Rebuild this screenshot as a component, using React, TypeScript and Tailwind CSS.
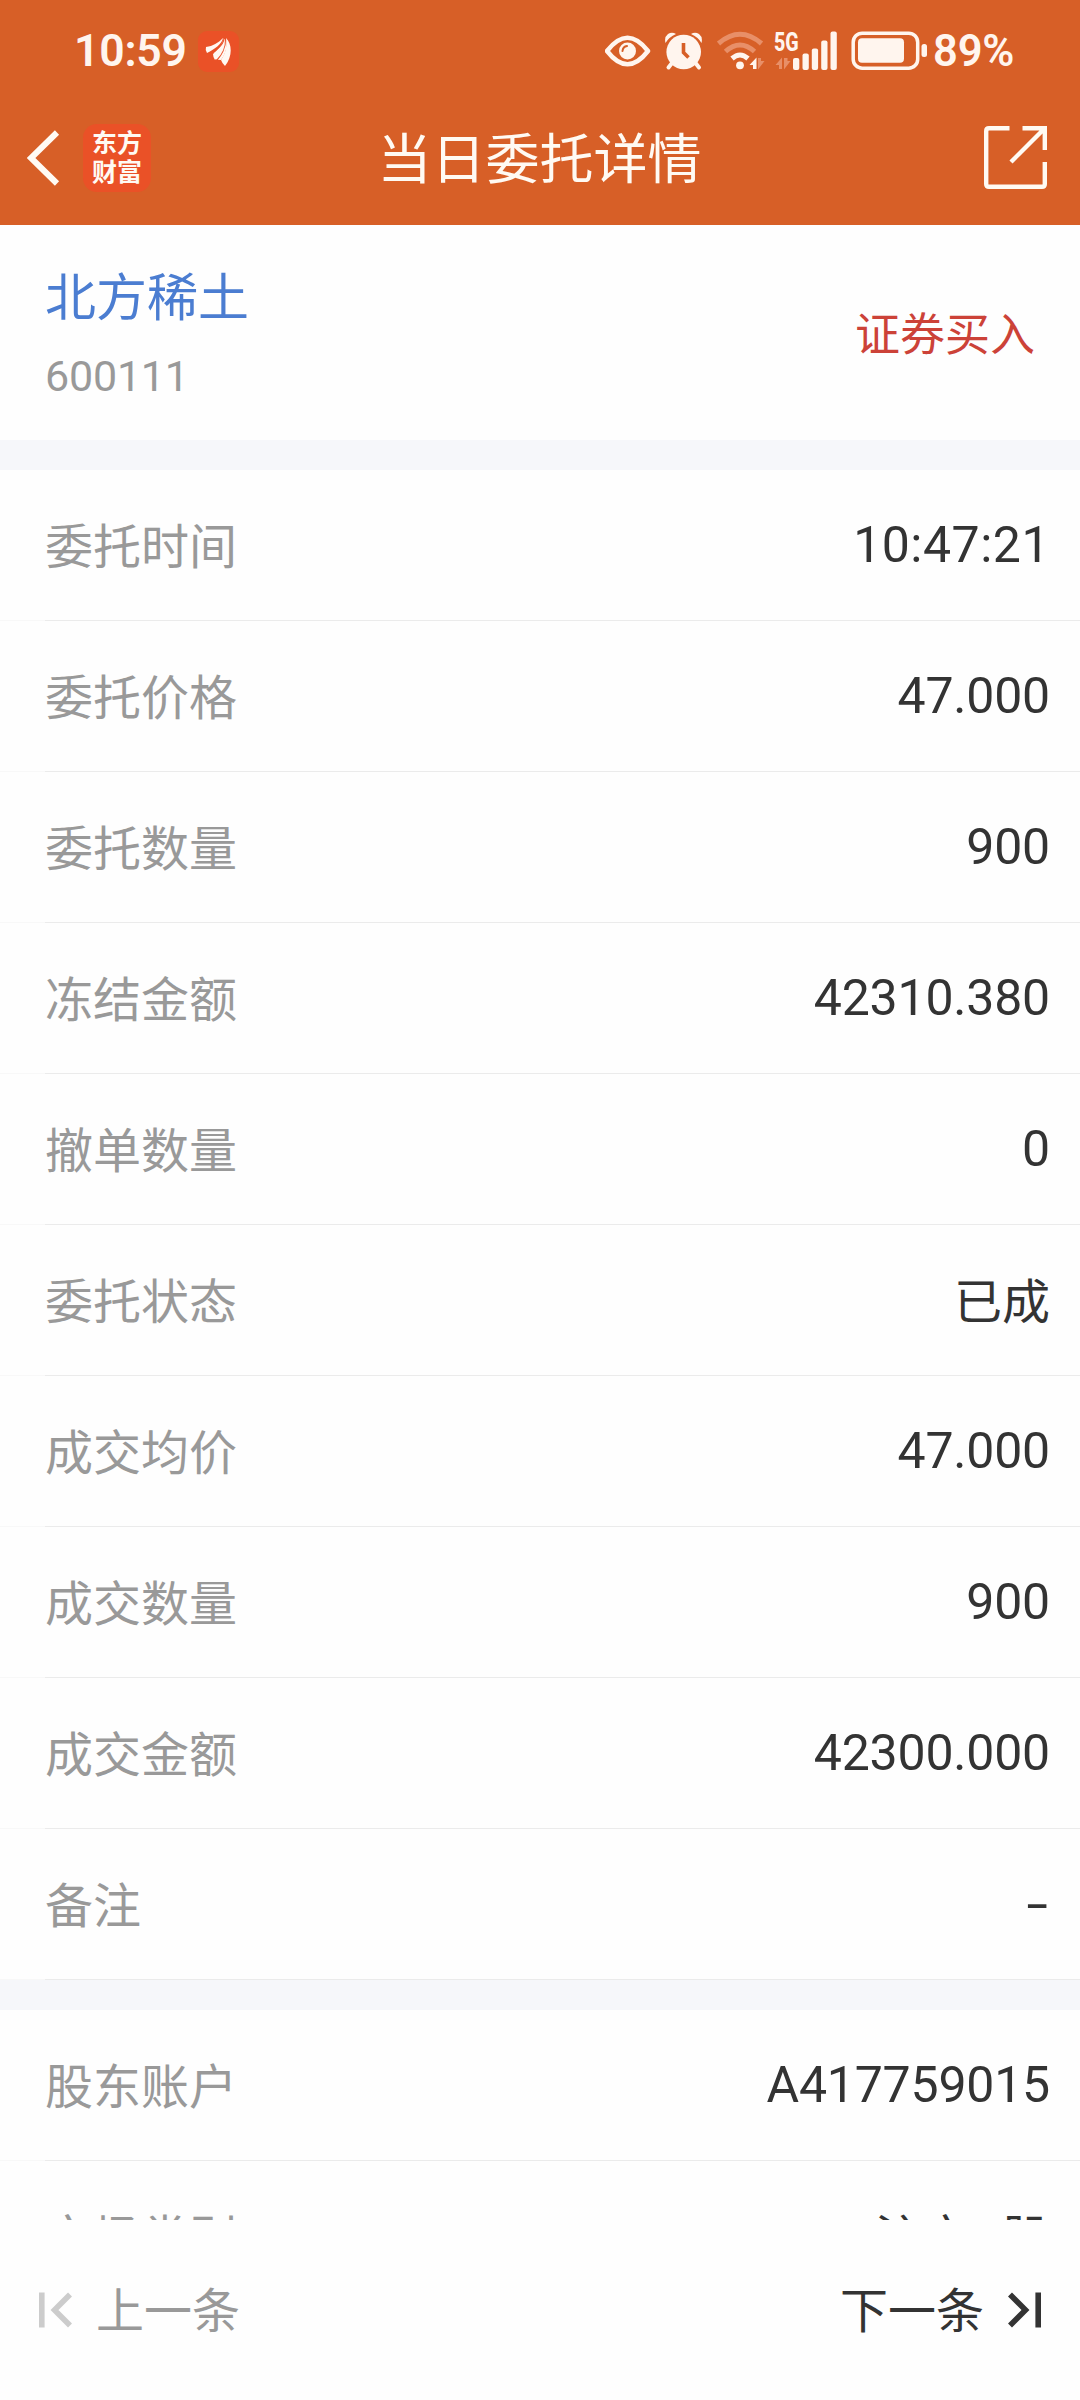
import type { ReactNode } from 'react';

type RowItem = {
  label: string;
  value: string;
};

const orderRows: RowItem[] = [
  { label: '委托时间', value: '10:47:21' },
  { label: '委托价格', value: '47.000' },
  { label: '委托数量', value: '900' },
  { label: '冻结金额', value: '42310.380' },
  { label: '撤单数量', value: '0' },
  { label: '委托状态', value: '已成' },
  { label: '成交均价', value: '47.000' },
  { label: '成交数量', value: '900' },
  { label: '成交金额', value: '42300.000' },
  { label: '备注', value: '-' },
];

const accountRows: RowItem[] = [
  { label: '股东账户', value: 'A417759015' },
  { label: '市场类别', value: '沪市A股' },
];

function AppBadge() {
  return (
    <svg width="41" height="41" viewBox="0 0 41 41" className="ml-[11px]">
      <rect width="41" height="41" rx="9" fill="#ea5127" />
      <g fill="#fff8f2">
        <path d="M8 16C15 15 20 12 25 7C24 13 17 18 9 22Q7 19 8 16Z" />
        <path d="M26 7C27 14 22 23 17 29Q15 26 15 23C20 19 24 14 26 7Z" />
        <path d="M28 7C34 13 35 25 27 35Q24 32 23 29C28 22 29 15 28 7Z" />
        <path d="M16 22C21 19 25 14 26 8L28 8C30 18 26 25 23 29Q20 29 17 28Z" />
      </g>
      <path d="M26 8C25 15 17 20 12 22M27.500 8C28 17 23 25 19 29" fill="none" stroke="#ea5127" strokeWidth="1.100" />
    </svg>
  );
}

function EyeIcon() {
  return (
    <svg width="46" height="40" viewBox="605 31 46 40">
      <path d="M607 51Q627.500 24.500 648 51Q627.500 77.500 607 51Z" fill="none" stroke="#fff5ee" strokeWidth="4.500" strokeLinejoin="round" />
      <circle cx="627.500" cy="51" r="8.500" fill="#fff5ee" />
      <path d="M622.500 51Q623 46.500 627 46" fill="none" stroke="#d75f27" strokeWidth="2" strokeLinecap="round" />
    </svg>
  );
}

function AlarmIcon() {
  return (
    <svg width="38" height="40" viewBox="665 31 38 40" className="ml-[14px]">
      <circle cx="683.700" cy="52" r="17.300" fill="#fff5ee" />
      <path d="M672 63L668.500 67.500M695.500 63L699 67.500" stroke="#fff5ee" strokeWidth="4" strokeLinecap="round" />
      <path d="M665.500 43Q664 37 668 34Q672 31.500 676 34Q669 37 665.500 43ZM701.500 43Q703 37 699 34Q695 31.500 691 34Q698 37 701.500 43Z" fill="#fff5ee" />
      <path d="M683.500 43V52.500L688.500 57.500" fill="none" stroke="#d75f27" strokeWidth="3.600" />
    </svg>
  );
}

function WifiIcon() {
  return (
    <svg width="48" height="40" viewBox="717 31 48 40" className="ml-[14px]">
      <g fill="none" strokeWidth="5">
        <path d="M718.500 43.500Q740 25 761.500 43.500" stroke="#e88f68" />
        <path d="M725.500 51.500Q740 38.500 754.500 51.500" stroke="#e88f68" />
        <path d="M732 58.500Q740 51.500 748 58.500" stroke="#fff5ee" />
      </g>
      <circle cx="740" cy="65.300" r="3.900" fill="#fff5ee" />
      <path d="M756.500 69V57.500L749.500 65H753V69Z" fill="#fff5ee" />
      <path d="M758 58V69.500L764.500 61H761V58Z" fill="#e88f68" />
    </svg>
  );
}

function SignalIcon() {
  return (
    <div className="relative ml-[9px] h-[40px] w-[64px]">
      <span className="absolute left-0 top-[-2px] origin-left scale-x-[0.770] text-[25.500px] font-extrabold leading-[26px]">5G</span>
      <svg width="64" height="40" viewBox="774 31 64 40">
        <path d="M782 69V57.500L775.500 65H779V69ZM784 58V69.500L790.500 61H787.500V58Z" fill="#e88f68" />
        <g fill="#fff5ee">
          <rect x="793" y="58" width="6.300" height="12" rx="2" />
          <rect x="802.500" y="53.500" width="6.300" height="16.500" rx="2" />
          <rect x="811.800" y="48.500" width="6.300" height="21.500" rx="2" />
          <rect x="821.200" y="40.500" width="6.300" height="29.500" rx="2" />
          <rect x="830.500" y="31.500" width="6.300" height="38.500" rx="2" />
        </g>
      </svg>
    </div>
  );
}

function BatteryIcon() {
  return (
    <svg width="76" height="40" viewBox="851 31 76 40" className="ml-[13px]">
      <rect x="853.200" y="33.200" width="64.500" height="35" rx="9" fill="none" stroke="#fff5ee" strokeWidth="3.500" />
      <rect x="858" y="38.300" width="46" height="24.500" rx="4" fill="#fff5ee" />
      <rect x="921.500" y="44" width="5.500" height="13" rx="2.500" fill="#fff5ee" />
    </svg>
  );
}

function StatusBar() {
  return (
    <div className="flex h-[90px] items-center justify-between pl-[74px] pr-[66px] pt-3 text-[#fff5ee]">
      <div className="flex items-center">
        <span className="text-[44.500px] font-semibold leading-none tracking-[-0.200px]">10:59</span>
        <AppBadge />
      </div>
      <div className="flex items-center">
        <EyeIcon />
        <AlarmIcon />
        <WifiIcon />
        <SignalIcon />
        <BatteryIcon />
        <span className="ml-[6px] pt-[2px] text-[43.500px] font-semibold leading-none tracking-[-0.300px]">89%</span>
      </div>
    </div>
  );
}

function NavBar() {
  return (
    <div className="grid h-[135px] grid-cols-3 items-center pl-[27px] pr-[33px] text-[#fffaf3]">
      <div className="flex items-center">
        <svg width="33" height="56" viewBox="0 0 33 56">
          <path d="M30 2.500L4 28L30 53.500" fill="none" stroke="currentColor" strokeWidth="6" />
        </svg>
        <div className="ml-[23px] flex h-[68px] w-[68px] flex-col items-center justify-center rounded-[14px] bg-[#ea5127] text-[25px] font-bold leading-[29px]">
          <span>东方</span>
          <span>财富</span>
        </div>
      </div>
      <h1 className="whitespace-nowrap pl-[5px] pt-[7px] text-center text-[54px] leading-none">当日委托详情</h1>
      <svg width="63" height="63" viewBox="0 0 63 63" className="justify-self-end">
        <path d="M25.500 2.200H5Q2.200 2.200 2.200 5V58Q2.200 60.800 5 60.800H58Q60.800 60.800 60.800 58V36M38.500 2.200H60.800V24M60 3L27 36" fill="none" stroke="currentColor" strokeWidth="4.400" />
      </svg>
    </div>
  );
}

function Value({ text }: { text: string }) {
  if (text === '-') {
    return <span className="mr-[2px] origin-right scale-x-[1.550] text-[50px] leading-none text-[#333333]">-</span>;
  }
  if (/^[\u4e00-\u9fff]/.test(text)) {
    return <span className="pt-[5px] text-[48px] leading-none text-[#333333]">{text}</span>;
  }
  if (text.includes(':')) {
    return <span className="text-[50px] leading-none tracking-[0.500px] text-[#333333]">{text}</span>;
  }
  return <span className="text-[50px] leading-none tracking-[-0.200px] text-[#333333]">{text}</span>;
}

function Row({ label, value }: RowItem) {
  return (
    <div className="h-[151px]">
      <div className="flex h-[150px] items-center justify-between pl-[45px] pr-[30px]">
        <span className="pt-[5px] text-[48px] leading-none text-[#999999]">{label}</span>
        <Value text={value} />
      </div>
      <div className="flex h-px bg-[#ebebeb]">
        <div className="w-[45px] bg-[#f8f8f8]" />
      </div>
    </div>
  );
}

function Section({ children }: { children: ReactNode }) {
  return <section className="border-t-[30px] border-[#f6f7fa]">{children}</section>;
}

export default function App() {
  return (
    <div className="flex h-[2400px] w-[1080px] flex-col overflow-hidden bg-[#fefefe] font-[Roboto,'Noto_Sans_CJK_SC',sans-serif]">
      <header className="h-[225px] shrink-0 bg-[#d75f27]">
        <StatusBar />
        <NavBar />
      </header>

      <main className="h-[1995px] shrink-0 overflow-hidden">
        <div className="flex h-[215px] items-center justify-between pl-[45px] pr-[45px]">
          <div className="flex flex-col pt-[3px]">
            <span className="text-[51px] leading-[72px] text-[#4b7dd1]">北方稀土</span>
            <span className="mt-[11px] text-[43px] leading-[60px] tracking-[-0.200px] text-[#999999]">600111</span>
          </div>
          <span className="pt-[5px] text-[45px] leading-none text-[#cc4238]">证券买入</span>
        </div>
        <Section>
          {orderRows.map((row) => (
            <Row key={row.label} {...row} />
          ))}
        </Section>
        <Section>
          {accountRows.map((row) => (
            <Row key={row.label} {...row} />
          ))}
        </Section>
      </main>

      <footer className="flex h-[180px] shrink-0 items-center justify-between pl-[39px] pr-[39px] text-[48px] leading-none">
        <button className="flex items-center gap-[23px] text-[#999999]">
          <svg width="34" height="36" viewBox="0 0 34 36" className="text-[#cccccc]">
            <path d="M2.800 .5V35.500M31 2.500L15.500 18L31 33.500" fill="none" stroke="currentColor" strokeWidth="5.600" />
          </svg>
          <span className="pt-[4px]">上一条</span>
        </button>
        <button className="flex items-center gap-[23px] text-[#333333]">
          <span className="pt-[4px]">下一条</span>
          <svg width="34" height="36" viewBox="0 0 34 36">
            <path d="M31.200 .5V35.500M3 2.500L18.500 18L3 33.500" fill="none" stroke="currentColor" strokeWidth="5.600" />
          </svg>
        </button>
      </footer>
    </div>
  );
}
